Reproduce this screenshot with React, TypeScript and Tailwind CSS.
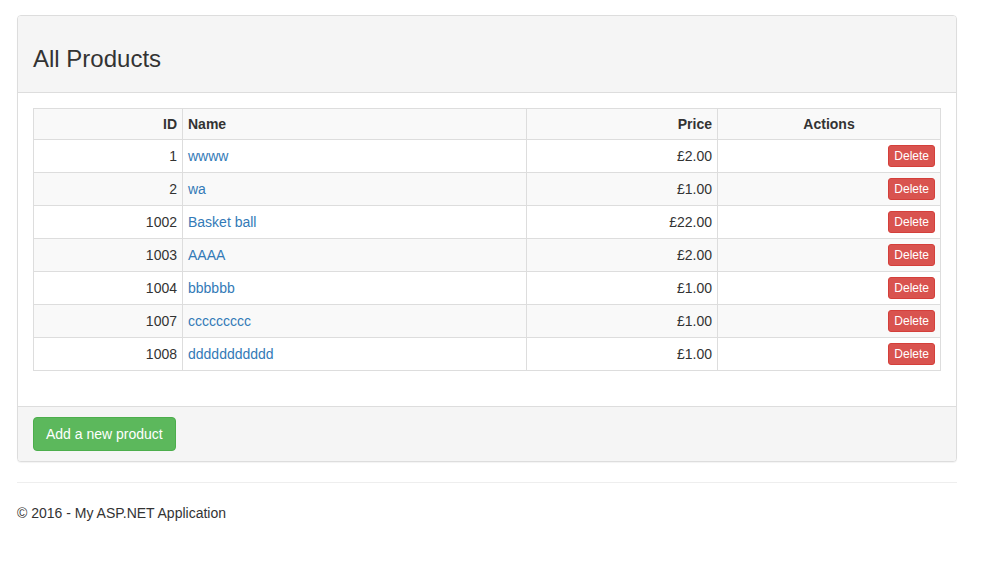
import React from 'react';

interface Product {
  id: number;
  name: string;
  price: string;
}

const products: Product[] = [
  { id: 1, name: 'wwww', price: '£2.00' },
  { id: 2, name: 'wa', price: '£1.00' },
  { id: 1002, name: 'Basket ball', price: '£22.00' },
  { id: 1003, name: 'AAAA', price: '£2.00' },
  { id: 1004, name: 'bbbbbb', price: '£1.00' },
  { id: 1007, name: 'ccccccccc', price: '£1.00' },
  { id: 1008, name: 'ddddddddddd', price: '£1.00' },
];

export default function App() {
  return (
    <div className="min-h-[565px] bg-white font-['Liberation_Sans',Arial,sans-serif] text-[14px] leading-[20px] text-[#333]">
      <div className="ml-[17px] w-[940px] pt-[15px]">
        {/* Panel */}
        <div className="mb-[20px] rounded-[4px] border border-[#ddd] bg-white shadow-[0_1px_1px_rgba(0,0,0,0.05)]">
          <div className="rounded-t-[3px] border-b border-[#ddd] bg-[#f5f5f5] px-[15px] py-[10px]">
            <h3 className="mb-[10px] mt-[20px] text-[24px] leading-[26.4px] font-normal text-[#333]">All Products</h3>
          </div>

          <div className="p-[15px]">
            <table className="mb-[20px] w-full table-fixed border-collapse border border-[#ddd]">
              <colgroup>
                <col className="w-[149px]" />
                <col className="w-[344px]" />
                <col className="w-[191px]" />
                <col />
              </colgroup>
              <thead>
                <tr className="bg-[#f9f9f9]">
                  <th className="border border-[#ddd] px-[5px] py-[5px] text-right font-bold">ID</th>
                  <th className="border border-[#ddd] px-[5px] py-[5px] text-left font-bold">Name</th>
                  <th className="border border-[#ddd] px-[5px] py-[5px] text-right font-bold">Price</th>
                  <th className="border border-[#ddd] px-[5px] py-[5px] text-center font-bold">Actions</th>
                </tr>
              </thead>
              <tbody>
                {products.map((p, i) => (
                  <tr key={p.id} className={i % 2 === 1 ? 'bg-[#f9f9f9]' : 'bg-white'}>
                    <td className="border border-[#ddd] px-[5px] py-[5px] text-right align-middle">{p.id}</td>
                    <td className="border border-[#ddd] px-[5px] py-[5px] align-middle">
                      <a href="#" className="text-[#337ab7]">{p.name}</a>
                    </td>
                    <td className="border border-[#ddd] px-[5px] py-[5px] text-right align-middle">{p.price}</td>
                    <td className="border border-[#ddd] px-[5px] py-[5px] text-right align-middle">
                      <button className="inline-block rounded-[3px] border border-[#d43f3a] bg-[#d9534f] px-[5px] py-[1px] text-[12px] leading-[18px] text-white">
                        Delete
                      </button>
                    </td>
                  </tr>
                ))}
              </tbody>
            </table>
          </div>

          <div className="rounded-b-[3px] border-t border-[#ddd] bg-[#f5f5f5] px-[15px] py-[10px]">
            <button className="inline-block rounded-[4px] border border-[#4cae4c] bg-[#5cb85c] px-[12px] py-[6px] text-[14px] leading-[20px] text-white">
              Add a new product
            </button>
          </div>
        </div>

        <hr className="my-[20px] border-0 border-t border-[#eee]" />
        <footer>
          <p className="mb-[10px]">© 2016 - My ASP.NET Application</p>
        </footer>
      </div>
    </div>
  );
}
